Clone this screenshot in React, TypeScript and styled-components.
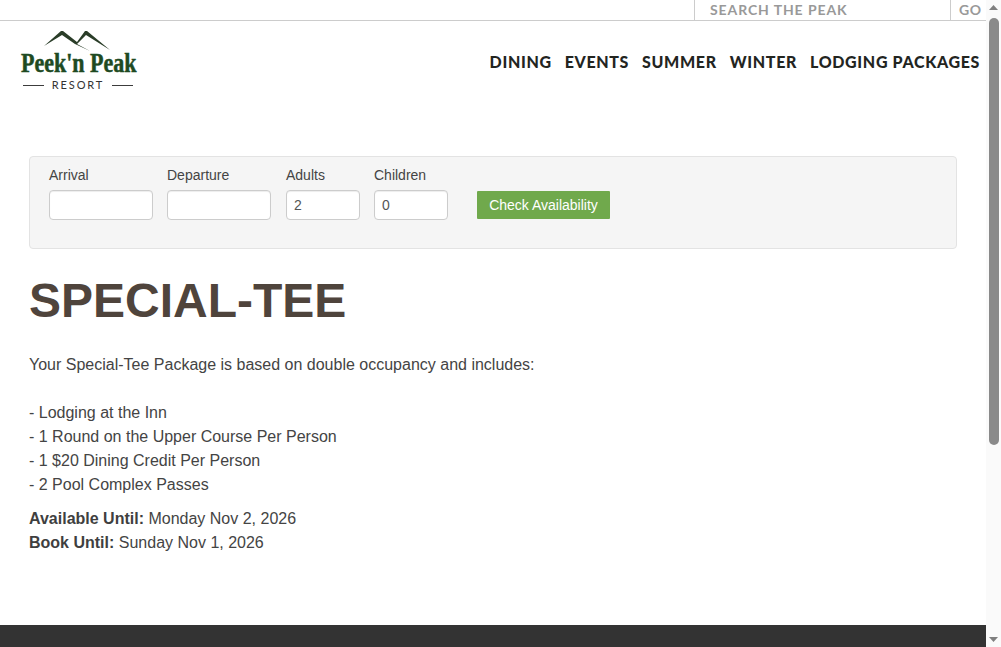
import React from "react";
import styled, { createGlobalStyle } from "styled-components";

const GlobalStyle = createGlobalStyle`
  html, body {
    margin: 0;
    padding: 0;
    height: 100%;
    overflow: hidden;
    background: #fff;
  }
  #root {
    height: 100%;
  }
`;

const Shell = styled.div`
  display: flex;
  width: 1001px;
  height: 647px;
  overflow: hidden;
  font-family: "Liberation Sans", Arial, sans-serif;
  color: #444;
`;

const Page = styled.div`
  width: 986px;
  height: 647px;
  display: flex;
  flex-direction: column;
`;

const TopBar = styled.div`
  display: flex;
  justify-content: flex-end;
  height: 20px;
  border-bottom: 1px solid #ccc;
  flex: none;
`;

const SearchBox = styled.div`
  width: 240px;
  padding-left: 15px;
  border-left: 1px solid #ccc;
  border-right: 1px solid #ccc;
  font: 700 14px/20px Lato, sans-serif;
  letter-spacing: 0.9px;
  color: #999;
`;

const GoLabel = styled.span`
  width: 27px;
  padding-left: 8px;
  font: 700 14px/20px Lato, sans-serif;
  letter-spacing: 0.7px;
  color: #999;
`;

const Header = styled.header`
  height: 126px;
  flex: none;
  display: flex;
  justify-content: space-between;
  align-items: flex-start;
  padding: 9px 6px 0 20px;
`;

const LogoWrap = styled.div`
  width: 116px;
  display: flex;
  flex-direction: column;
`;

const Mountains = styled.svg`
  display: block;
  width: 116px;
  height: 21px;
  fill: #2a3d28;
`;

const Wordmark = styled.div`
  margin-left: 1px;
  font: 700 22px/24px "Liberation Serif", serif;
  color: #1e4a22;
  white-space: nowrap;
  transform: scaleY(1.25);
  -webkit-text-stroke: 0.4px #1e4a22;
`;

const ResortRow = styled.div`
  display: flex;
  align-items: center;
  justify-content: space-between;
  padding: 0 3px;
  margin-top: 4px;
  font: 400 11px/12px Lato, sans-serif;
  letter-spacing: 1.9px;
  color: #333;
`;

const ResortRule = styled.span`
  width: 21px;
  height: 1px;
  background: #3c3c3c;
`;

const Nav = styled.nav`
  display: flex;
  gap: 13px;
  margin-top: 21px;
`;

const NavLink = styled.a`
  font: 900 16px/22px Lato, sans-serif;
  letter-spacing: 0.65px;
  color: #23251f;
  white-space: nowrap;
`;

const Main = styled.main`
  flex: 1;
  padding: 0 29px;
`;

const BookingPanel = styled.form`
  box-sizing: border-box;
  width: 928px;
  height: 93px;
  padding: 10px 19px;
  display: flex;
  align-items: flex-start;
  background: #f5f5f5;
  border: 1px solid #e3e3e3;
  border-radius: 4px;
`;

const Field = styled.div<{ $wide?: boolean }>`
  display: flex;
  flex-direction: column;
  width: ${(p) => (p.$wide ? "104px" : "74px")};
  margin-right: 14px;

  &:nth-child(2) {
    margin-right: 15px;
  }
`;

const FieldLabel = styled.label`
  font-size: 14px;
  line-height: 16px;
  margin-bottom: 7px;
  color: #444;
`;

const FieldInput = styled.input`
  box-sizing: border-box;
  width: 100%;
  height: 30px;
  padding: 0 7px;
  font: 14px "Liberation Sans", Arial, sans-serif;
  color: #555;
  background: #fff;
  border: 1px solid #ccc;
  border-radius: 4px;
  box-shadow: inset 0 1px 1px rgba(0, 0, 0, 0.075);
`;

const CheckButton = styled.button`
  box-sizing: border-box;
  width: 133px;
  height: 28px;
  margin: 24px 0 0 15px;
  padding: 0;
  font: 14px "Liberation Sans", Arial, sans-serif;
  color: #fff;
  background: #70a94c;
  border: 0;
  border-radius: 1px;
`;

const Title = styled.h1`
  margin: 23px 0 23px;
  font-size: 48px;
  line-height: 58px;
  font-weight: 700;
  color: #4f443c;
`;

const Copy = styled.p`
  margin: 0 0 10px;
  font-size: 16px;
  line-height: 24px;
  color: #444;
`;

const Strong = styled.strong`
  color: #3f3f3f;
`;

const Footer = styled.footer`
  height: 22px;
  flex: none;
  background: #333;
`;

const Scrollbar = styled.div`
  width: 15px;
  height: 647px;
  flex: none;
  background: #fafafa;
  display: flex;
  flex-direction: column;
  align-items: center;
`;

const ScrollArrow = styled.svg<{ $end?: boolean }>`
  width: 9px;
  height: 5px;
  flex: none;
  fill: #7f7f7f;
  margin: ${(p) => (p.$end ? "0 0 5px" : "5px 0 0")};
`;

const ScrollThumb = styled.div`
  width: 10px;
  height: 427px;
  margin-top: 8px;
  background: #8a8a8a;
  border-radius: 5px;
`;

const ScrollSpacer = styled.div`
  flex: 1;
`;

const Logo = () => (
  <LogoWrap>
    <Mountains viewBox="0 0 116 21">
      <path d="M24 16 L41 1 L43 1 L57 12 L65 1 L67 1 L90 20 L66 5 L57 14 L70 21 L55 14 L42 5 Z" />
    </Mountains>
    <Wordmark>Peek'n Peak</Wordmark>
    <ResortRow>
      <ResortRule />
      RESORT
      <ResortRule />
    </ResortRow>
  </LogoWrap>
);

export default function App() {
  return (
    <Shell>
      <GlobalStyle />
      <Page>
        <TopBar>
          <SearchBox>SEARCH THE PEAK</SearchBox>
          <GoLabel>GO</GoLabel>
        </TopBar>
        <Header>
          <Logo />
          <Nav>
            <NavLink>DINING</NavLink>
            <NavLink>EVENTS</NavLink>
            <NavLink>SUMMER</NavLink>
            <NavLink>WINTER</NavLink>
            <NavLink>LODGING PACKAGES</NavLink>
          </Nav>
        </Header>
        <Main>
          <BookingPanel>
            <Field $wide>
              <FieldLabel>Arrival</FieldLabel>
              <FieldInput />
            </Field>
            <Field $wide>
              <FieldLabel>Departure</FieldLabel>
              <FieldInput />
            </Field>
            <Field>
              <FieldLabel>Adults</FieldLabel>
              <FieldInput defaultValue="2" />
            </Field>
            <Field>
              <FieldLabel>Children</FieldLabel>
              <FieldInput defaultValue="0" />
            </Field>
            <CheckButton type="button">Check Availability</CheckButton>
          </BookingPanel>
          <Title>SPECIAL-TEE</Title>
          <Copy>
            Your Special-Tee Package is based on double occupancy and includes:
            <br />
            <br />- Lodging at the Inn
            <br />- 1 Round on the Upper Course Per Person
            <br />- 1 $20 Dining Credit Per Person
            <br />- 2 Pool Complex Passes
          </Copy>
          <Copy>
            <Strong>Available Until:</Strong> Monday Nov 2, 2026
            <br />
            <Strong>Book Until:</Strong> Sunday Nov 1, 2026
          </Copy>
        </Main>
        <Footer />
      </Page>
      <Scrollbar>
        <ScrollArrow viewBox="0 0 9 5">
          <path d="M4.5 0 L9 5 H0 Z" />
        </ScrollArrow>
        <ScrollThumb />
        <ScrollSpacer />
        <ScrollArrow viewBox="0 0 9 5" $end>
          <path d="M0 0 H9 L4.5 5 Z" />
        </ScrollArrow>
      </Scrollbar>
    </Shell>
  );
}
